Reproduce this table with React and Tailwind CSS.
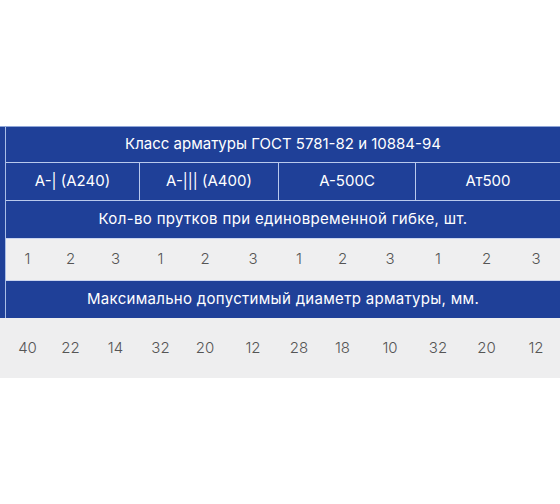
import React from "react";

const cols = "grid grid-cols-[43px_43px_47px_43px_46px_50px_42px_45px_50px_46px_51px_48px]";
const counts = [1, 2, 3, 1, 2, 3, 1, 2, 3, 1, 2, 3];
const diam = [40, 22, 14, 32, 20, 12, 28, 18, 10, 32, 20, 12];
const classes = ["А-| (А240)", "А-||| (А400)", "А-500С", "Ат500"];

export default function App() {
  return (
    <div
      className="w-[560px] h-[504px] bg-white overflow-hidden pt-[126px]"
      style={{ fontFamily: "Inter, 'Open Sans', sans-serif" }}
    >
      <div className="flex bg-[#1f4098] border-t border-[#8fa6d8]">
        <div className="w-[5px] bg-[#1f4098]" />
        <div className="w-px bg-[#a9bde6]" />
        <div className="flex-1 flex flex-col text-white text-[15px]">
          <div className="h-[36px] flex items-center justify-center border-b border-[#b9c9ec]">
            Класс арматуры ГОСТ 5781-82 и 10884-94
          </div>
          <div className="h-[38px] grid grid-cols-[133px_139px_137px_145px] border-b border-[#b9c9ec]">
            {classes.map((c, i) => (
              <div
                key={c}
                className={
                  "flex items-center justify-center " +
                  (i > 0 ? "border-l border-[#b9c9ec]" : "")
                }
              >
                {c}
              </div>
            ))}
          </div>
          <div className="h-[37px] flex items-center justify-center tracking-[0.35px]">
            Кол-во прутков при единовременной гибке, шт.
          </div>
          <div className={cols + " h-[43px] bg-[#efeff0] text-[#555555] font-light border-y border-[#c9d4ee]"}>
            {counts.map((n, i) => (
              <div key={i} className="flex items-center justify-center">
                {n}
              </div>
            ))}
          </div>
          <div className="h-[37px] flex items-center justify-center tracking-[0.3px]">
            Максимально допустимый диаметр арматуры, мм.
          </div>
        </div>
      </div>
      <div className="h-[60px] bg-[#eeeeef] pl-[6px]">
        <div className={cols + " h-full text-[#555555] font-light text-[15px]"}>
          {diam.map((n, i) => (
            <div key={i} className="flex items-center justify-center">
              {n}
            </div>
          ))}
        </div>
      </div>
    </div>
  );
}
